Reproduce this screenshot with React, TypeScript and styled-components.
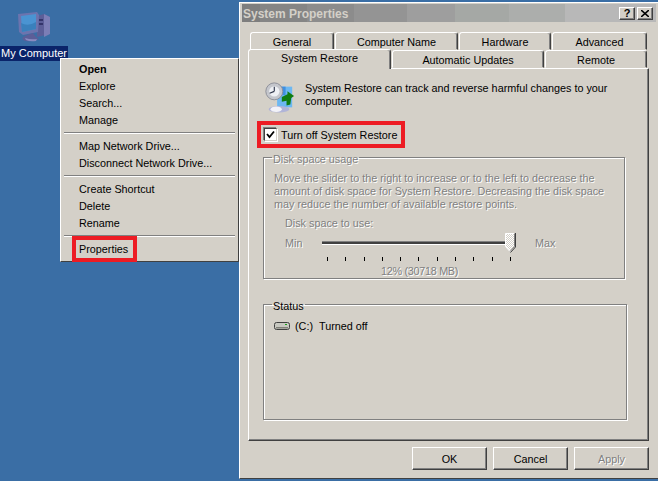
import styled, { createGlobalStyle } from "styled-components";

const GlobalStyle = createGlobalStyle`
  html, body {
    margin: 0;
    padding: 0;
    background: #3a6ea5;
  }
  * {
    box-sizing: border-box;
  }
`;

const Desktop = styled.div`
  position: relative;
  width: 658px;
  height: 481px;
  overflow: hidden;
  background: #3a6ea5;
  font-family: "Liberation Sans", Arial, sans-serif;
  font-size: 10.8px;
  color: #000;
`;

const DesktopIcon = styled.div`
  position: absolute;
  left: 0;
  top: 11px;
  width: 68px;
  display: flex;
  flex-direction: column;
  align-items: center;
  gap: 3px;
`;

const IconLabel = styled.span`
  width: 68px;
  height: 15px;
  line-height: 15px;
  background: #0a246a;
  color: #fff;
  text-align: center;
  font-size: 11px;
  white-space: nowrap;
`;

const Menu = styled.div`
  position: absolute;
  left: 60px;
  top: 58px;
  width: 179px;
  height: 204px;
  padding: 2px 3px;
  background: #d4d0c8;
  border: 1px solid;
  border-color: #fff #404040 #404040 #fff;
`;

const MenuItem = styled.div<{ $bold?: boolean }>`
  height: 17px;
  line-height: 17px;
  padding-left: 15px;
  white-space: nowrap;
  font-weight: ${(p) => (p.$bold ? 700 : 400)};
`;

const MenuDivider = styled.div`
  height: 2px;
  margin: 3px 0 4px;
  background: #808080;
  border-bottom: 1px solid #fff;
`;

const Marked = styled.span`
  position: relative;
  display: inline-block;

  &::after {
    content: "";
    position: absolute;
    border: 4px solid #ed1c24;
    pointer-events: none;
  }
`;

const MarkedProperties = styled(Marked)`
  &::after {
    left: -7px;
    right: -9px;
    top: -5px;
    bottom: -4px;
  }
`;

const Window = styled.div`
  position: absolute;
  left: 239px;
  top: 2px;
  width: 421px;
  height: 477px;
  padding: 1px 2px;
  background: #d4d0c8;
  border: 1px solid;
  border-color: #fff #404040 #404040 #fff;
`;

const TitleBar = styled.div`
  height: 18px;
  margin-right: 1px;
  display: flex;
  align-items: center;
  justify-content: space-between;
  padding: 1px 3px 0 1px;
  background: linear-gradient(
    90deg,
    #7e7e7e 0 18px,
    #858585 18px 65px,
    #8c8c8c 65px 112px,
    #949494 112px 165px,
    #9e9e9e 165px 213px,
    #a5a8a5 213px 267px,
    #acaeac 267px 323px,
    #b8b8b8 323px
  );
`;

const TitleText = styled.span`
  font-weight: 700;
  font-size: 12px;
  color: #d4d0c8;
`;

const TitleButtons = styled.div`
  display: flex;
  gap: 2px;
`;

const TitleButton = styled.div`
  width: 16px;
  height: 13px;
  display: flex;
  align-items: center;
  justify-content: center;
  background: #d4d0c8;
  border: 1px solid;
  border-color: #fff #404040 #404040 #fff;
  box-shadow: inset -1px -1px 0 #808080;
  font-weight: 700;
  font-size: 11px;
  line-height: 1;
`;

const TabArea = styled.div`
  padding: 10px 0 0 6px;
`;

const TabRow = styled.div<{ $front?: boolean }>`
  display: flex;
  height: 18px;
  align-items: flex-end;
  padding-left: ${(p) => (p.$front ? 0 : 2)}px;
`;

const Tab = styled.div<{ $w: number; $active?: boolean }>`
  width: ${(p) => p.$w}px;
  height: ${(p) => (p.$active ? 20 : 18)}px;
  margin-right: 1px;
  padding-top: ${(p) => (p.$active ? 1 : 2)}px;
  line-height: 15px;
  text-align: center;
  white-space: nowrap;
  background: #d4d0c8;
  border: 1px solid;
  border-color: #fff #404040 transparent #fff;
  border-radius: 3px 3px 0 0;
  box-shadow: inset -1px 0 0 #808080;
  position: relative;
  z-index: ${(p) => (p.$active ? 2 : 0)};
  margin-bottom: ${(p) => (p.$active ? -1 : 0)}px;
  ${(p) => p.$active && "border-bottom: 0;"}
`;

const Panel = styled.div`
  width: 401px;
  height: 373px;
  padding: 12px 0 0 14px;
  background: #d4d0c8;
  border: 1px solid;
  border-color: #fff #404040 #404040 #fff;
  box-shadow: inset -1px -1px 0 #808080;
  position: relative;
  z-index: 1;
`;

const Intro = styled.div`
  display: flex;
  gap: 10px;
  align-items: flex-start;
  line-height: 13px;
  width: 352px;
  height: 32px;

  svg {
    flex: none;
  }
`;

const IntroText = styled.span`
  margin-top: 1px;
`;

const CheckRow = styled.div`
  display: flex;
  align-items: center;
  height: 15px;
  margin: 14px 0 0 1px;
`;

const Checkbox = styled.div`
  width: 13px;
  height: 13px;
  display: flex;
  align-items: center;
  justify-content: center;
  background: #fff;
  border: 1px solid;
  border-color: #404040 #d4d0c8 #d4d0c8 #404040;
  box-shadow: -1px -1px 0 #808080, 1px 1px 0 #fff;
`;

const MarkedCheck = styled(Marked)`
  display: flex;
  align-items: center;
  gap: 4px;

  &::after {
    left: -7px;
    right: -8px;
    top: -7px;
    bottom: -7px;
  }
`;

const Group = styled.fieldset<{ $h: number; $w: number; $top: number; $pad: number }>`
  position: relative;
  width: ${(p) => p.$w}px;
  height: ${(p) => p.$h}px;
  margin: ${(p) => p.$top}px 0 0 0;
  padding: ${(p) => p.$pad}px 10px 0;
  border: 1px solid #808080;
  box-shadow: inset 1px 1px 0 #fff, 1px 1px 0 #fff;
`;

const Legend = styled.legend<{ $off?: boolean }>`
  padding: 4px 1px 0;
  margin-left: -2px;
  color: ${(p) => (p.$off ? "#808080" : "#000")};
  text-shadow: ${(p) => (p.$off ? "1px 1px 0 #fff" : "none")};
  line-height: 13px;
`;

const Disabled = styled.div`
  color: #808080;
  text-shadow: 1px 1px 0 #fff;
  line-height: 13px;
`;

const SliderBlock = styled.div`
  margin: 6px 0 0 11px;
`;

const SliderRow = styled.div`
  display: flex;
  align-items: center;
  margin-top: 2px;
  height: 22px;
`;

const SliderLabel = styled(Disabled)<{ $w: number; $gap?: number }>`
  width: ${(p) => p.$w}px;
  margin-left: ${(p) => p.$gap ?? 0}px;
`;

const Track = styled.div`
  position: relative;
  width: 194px;
  height: 4px;
  background: #404040;
  border-top: 1px solid #808080;
  border-bottom: 1px solid #fff;
`;

const Thumb = styled.svg`
  position: absolute;
  right: 0;
  top: -9px;
`;

const Ticks = styled.div`
  display: flex;
  justify-content: space-between;
  width: 184px;
  margin: 3px 0 0 42px;
`;

const Tick = styled.i`
  width: 1px;
  height: 4px;
  background: #000;
`;

const SliderValue = styled(Disabled)`
  margin: 4px 0 0 96px;
  letter-spacing: -0.28px;
`;

const StatusRow = styled.div`
  display: flex;
  align-items: center;
  gap: 5px;
  height: 15px;
`;

const StatusText = styled.span`
  display: flex;
  gap: 6px;
`;

const ButtonBar = styled.div`
  display: flex;
  gap: 6px;
  margin-top: 6px;
  padding-left: 170px;
`;

const Button = styled.div<{ $off?: boolean }>`
  width: 75px;
  height: 23px;
  display: flex;
  align-items: center;
  justify-content: center;
  background: #d4d0c8;
  border: 1px solid;
  border-color: #fff #404040 #404040 #fff;
  box-shadow: inset -1px -1px 0 #808080;
  color: ${(p) => (p.$off ? "#808080" : "#000")};
  text-shadow: ${(p) => (p.$off ? "1px 1px 0 #fff" : "none")};
`;

function ComputerIcon() {
  return (
    <svg width="34" height="32" viewBox="0 0 34 32">
      <path d="M20 5l7-2 6 3v17l-13 3z" fill="#5c5e98" />
      <path d="M27 3l6 3v17l-6 3z" fill="#7c7eb6" />
      <rect x="22" y="8" width="4" height="2" fill="#34346a" />
      <rect x="22" y="12" width="4" height="2" fill="#34346a" />
      <path d="M1 3l19-2 2 3-1 17-15 3-4-3z" fill="#6c74ae" />
      <path d="M4 5l15-2 0 15-14 3z" fill="#4a94d2" />
      <path d="M4 12q7 4 15-1v7l-14 3z" fill="#3a80bc" />
      <path d="M10 24l6-2 3 4 3 2q-6 3-13 2-5-1-3-4z" fill="#5c5e98" />
      <path d="M8 27q6 2 12 1l-1 2q-6 1-10-1z" fill="#8a8ac0" />
    </svg>
  );
}

function RestoreIcon() {
  return (
    <svg width="32" height="32" viewBox="0 0 32 34">
      <rect x="14" y="6" width="16" height="22" fill="#6db8f2" />
      <rect x="14" y="6" width="9" height="9" fill="#3f8fe0" />
      <circle cx="11" cy="11" r="9" fill="#c4c6cc" stroke="#8c8e98" />
      <circle cx="11" cy="11" r="5.5" fill="#eef0f4" />
      <path d="M11 11V6M11 11l-5 2" stroke="#30384c" strokeWidth="1.2" />
      <path d="M19 17l6-3v-3l7 5-3 2-1 7-4 1v-5l-5 1z" fill="#107c10" />
      <ellipse cx="16" cy="30" rx="11" ry="3.5" fill="#b0b4d8" />
      <ellipse cx="13" cy="30" rx="6" ry="3" fill="#f2f2f8" />
    </svg>
  );
}

function DriveIcon() {
  return (
    <svg width="16" height="10" viewBox="0 0 16 10">
      <rect x="0.5" y="1.5" width="15" height="7" rx="2" fill="#c8c8c0" stroke="#404040" />
      <rect x="2" y="6" width="12" height="1.5" fill="#808078" />
      <rect x="11" y="3" width="2" height="1" fill="#18a018" />
    </svg>
  );
}

function SliderThumb() {
  return (
    <Thumb width="11" height="20" viewBox="0 0 11 20">
      <defs>
        <pattern id="dither" width="2" height="2" patternUnits="userSpaceOnUse">
          <rect width="2" height="2" fill="#d4d0c8" />
          <rect width="1" height="1" fill="#fff" />
          <rect x="1" y="1" width="1" height="1" fill="#fff" />
        </pattern>
      </defs>
      <path d="M.5.5h9v13l-4.5 5-4.5-5z" fill="url(#dither)" stroke="#fff" />
      <path d="M9.5.5v13l-4.5 5" fill="none" stroke="#808080" />
      <path d="M10.5 0v14l-5 5.5" fill="none" stroke="#404040" />
    </Thumb>
  );
}

export default function App() {
  return (
    <Desktop>
      <GlobalStyle />
      <DesktopIcon>
        <ComputerIcon />
        <IconLabel>My Computer</IconLabel>
      </DesktopIcon>

      <Menu>
        <MenuItem $bold>Open</MenuItem>
        <MenuItem>Explore</MenuItem>
        <MenuItem>Search...</MenuItem>
        <MenuItem>Manage</MenuItem>
        <MenuDivider />
        <MenuItem>Map Network Drive...</MenuItem>
        <MenuItem>Disconnect Network Drive...</MenuItem>
        <MenuDivider />
        <MenuItem>Create Shortcut</MenuItem>
        <MenuItem>Delete</MenuItem>
        <MenuItem>Rename</MenuItem>
        <MenuDivider />
        <MenuItem>
          <MarkedProperties>Properties</MarkedProperties>
        </MenuItem>
      </Menu>

      <Window>
        <TitleBar>
          <TitleText>System Properties</TitleText>
          <TitleButtons>
            <TitleButton>?</TitleButton>
            <TitleButton>
              <svg width="8" height="7" viewBox="0 0 8 7">
                <path d="M0 0l8 7M8 0L0 7" stroke="#000" strokeWidth="1.6" />
              </svg>
            </TitleButton>
          </TitleButtons>
        </TitleBar>

        <TabArea>
          <TabRow>
            <Tab $w={84}>General</Tab>
            <Tab $w={123}>Computer Name</Tab>
            <Tab $w={92}>Hardware</Tab>
            <Tab $w={95}>Advanced</Tab>
          </TabRow>
          <TabRow $front>
            <Tab $w={143} $active>
              System Restore
            </Tab>
            <Tab $w={152}>Automatic Updates</Tab>
            <Tab $w={102}>Remote</Tab>
          </TabRow>
          <Panel>
            <Intro>
              <RestoreIcon />
              <IntroText>
                System Restore can track and reverse harmful changes to your computer.
              </IntroText>
            </Intro>
            <CheckRow>
              <MarkedCheck>
                <Checkbox>
                  <svg width="9" height="9" viewBox="0 0 9 9">
                    <path d="M1 4l2.5 3L8 1.5" fill="none" stroke="#000" strokeWidth="1.8" />
                  </svg>
                </Checkbox>
                Turn off System Restore
              </MarkedCheck>
            </CheckRow>
            <Group $w={362} $h={130} $top={7} $pad={6}>
              <Legend $off>Disk space usage</Legend>
              <Disabled>
                Move the slider to the right to increase or to the left to decrease the amount of disk
                space for System Restore. Decreasing the disk space may reduce the number of available
                restore points.
              </Disabled>
              <SliderBlock>
                <Disabled>Disk space to use:</Disabled>
                <SliderRow>
                  <SliderLabel $w={37}>Min</SliderLabel>
                  <Track>
                    <SliderThumb />
                  </Track>
                  <SliderLabel $w={30} $gap={19}>
                    Max
                  </SliderLabel>
                </SliderRow>
                <Ticks>
                  {Array.from({ length: 11 }, (_, i) => (
                    <Tick key={i} />
                  ))}
                </Ticks>
                <SliderValue>12% (30718 MB)</SliderValue>
              </SliderBlock>
            </Group>
            <Group $w={364} $h={124} $top={17} $pad={5}>
              <Legend>Status</Legend>
              <StatusRow>
                <DriveIcon />
                <StatusText>
                  <span>(C:)</span>
                  <span>Turned off</span>
                </StatusText>
              </StatusRow>
            </Group>
          </Panel>
        </TabArea>

        <ButtonBar>
          <Button>OK</Button>
          <Button>Cancel</Button>
          <Button $off>Apply</Button>
        </ButtonBar>
      </Window>
    </Desktop>
  );
}
